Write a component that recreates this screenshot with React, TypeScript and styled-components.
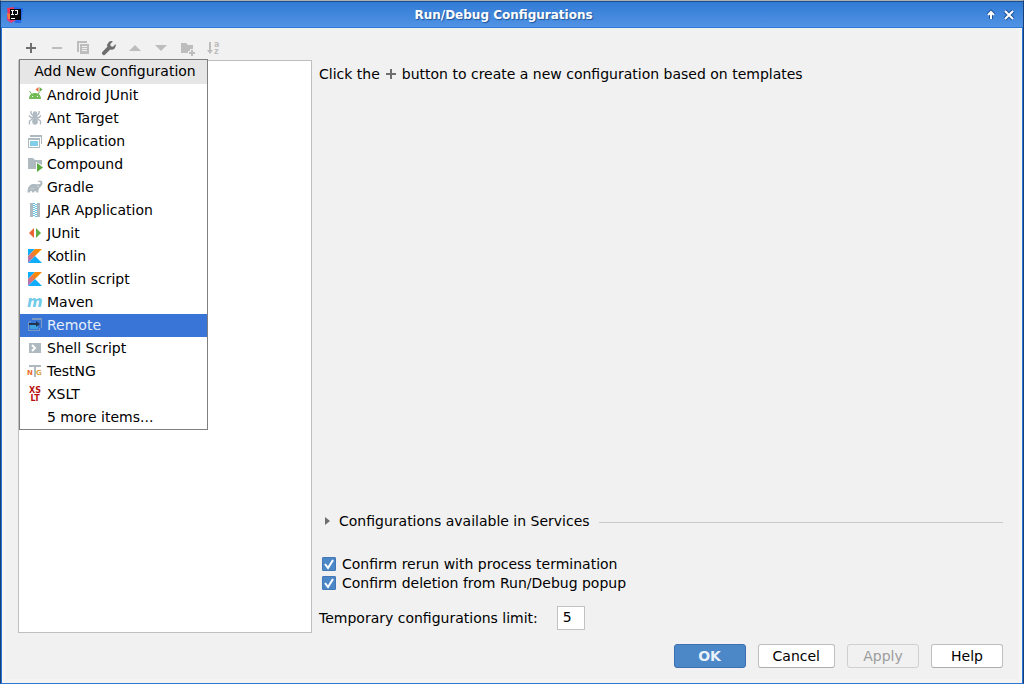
import React from "react";
import styled, { createGlobalStyle, css } from "styled-components";

const Global = createGlobalStyle`
  * { box-sizing: border-box; }
  body { margin: 0; background: #173f78; }
  body, button, input { font-family: "DejaVu Sans", sans-serif; font-size: 14px; color: #000; }
`;

const Window = styled.main`
  min-height: 100vh;
  display: flex;
  flex-direction: column;
  background: #f1f1f1;
  border: 1px solid #173f78;
  border-top-color: #a9b3b4;
  border-bottom-color: #2b76d2;
  box-shadow:
    inset 1px 0 #2b76d2,
    inset -1px 0 #2b76d2,
    inset 5px 0 #f5f4f3,
    inset -5px 0 #f5f4f3,
    inset 0 -4px #f5f4f3;
`;

const TitleBar = styled.header`
  display: flex;
  align-items: center;
  height: 27px;
  padding: 1px 7px 0 6px;
  gap: 4px;
  border-top: 1px solid #1d4d8d;
  border-bottom: 1px solid #2d78d6;
  background: linear-gradient(#317bd5, #5193e4);
`;

const Title = styled.h1`
  flex: 1;
  margin: 0;
  text-align: center;
  font-size: 12px;
  line-height: 16px;
  font-weight: bold;
  color: #fff;
  text-shadow: 1px 1px 1px #1d5299;
`;

const PlainButton = styled.button`
  display: flex;
  align-items: center;
  padding: 0;
  border: 0;
  background: none;
  text-align: left;
`;

const Body = styled.div`
  flex: 1;
  display: grid;
  grid-template-columns: 294px 1fr;
  column-gap: 7px;
  padding: 0 20px 0 17px;
`;

const Sidebar = styled.section`
  display: flex;
  flex-direction: column;
`;

const Toolbar = styled.div`
  display: flex;
  align-items: center;
  gap: 10px;
  height: 32px;
  padding: 8px 5px 0;
`;

const ConfigTree = styled.div`
  position: relative;
  flex: 1;
  min-height: 400px;
  background: #fff;
  border: 1px solid #bfbfbf;
`;

const Popup = styled.div`
  position: absolute;
  top: -2px;
  left: 0;
  width: 189px;
  background: #fff;
  border: 1px solid #7f7f7f;
`;

const PopupTitle = styled.h2`
  margin: 0;
  padding: 0 0 1px 3px;
  background: #e6e6e6;
  font-size: 14px;
  line-height: 23px;
  font-weight: normal;
  text-align: center;
`;

const MenuItem = styled(PlainButton)<{ $selected?: boolean }>`
  width: 100%;
  height: 23px;
  gap: 4px;
  padding: 0 0 1px 7px;
  line-height: 16px;
  ${(p) => p.$selected && css`
    background: #3875d7;
    color: #e6eefa;
  `}
`;

const Settings = styled.section`
  display: flex;
  flex-direction: column;
  padding: 36px 0 3px;
  line-height: 20px;
`;

const Hint = styled.p`
  display: flex;
  align-items: center;
  gap: 3px;
  margin: 0 0 auto;
`;

const ServicesRow = styled.div`
  display: flex;
  align-items: center;
  gap: 9px;
  margin-bottom: 24px;
`;

const Disclosure = styled(PlainButton)`
  gap: 4px;
  line-height: 20px;
`;

const Rule = styled.hr`
  flex: 1;
  margin: 2px 0 0;
  border: 0;
  border-top: 1px solid #c9c9c9;
`;

const CheckLabel = styled.label`
  display: flex;
  align-items: center;
  gap: 6px;
  padding-left: 3px;
  line-height: 19px;
`;

const CheckWrap = styled.span`
  display: grid;
  margin-bottom: 1px;
  > * { grid-area: 1 / 1; }
  svg { pointer-events: none; }
`;

const CheckInput = styled.input`
  appearance: none;
  width: 14px;
  height: 14px;
  margin: 0;
  border-radius: 1px;
  border: 1px solid #4377b5;
  background: #fff;
  &:checked { background: #4c88c8; }
`;

const LimitLabel = styled.label`
  display: flex;
  align-items: center;
  gap: 19px;
  margin-top: 13px;
`;

const LimitInput = styled.input`
  width: 28px;
  height: 24px;
  padding: 0 5px 2px;
  border: 1px solid #c2c2c2;
  background: #fff;
`;

const Footer = styled.footer`
  display: flex;
  justify-content: flex-end;
  gap: 12px;
  padding: 11px 20px 15px;
`;

const DialogButton = styled.button<{ $primary?: boolean }>`
  min-width: 72px;
  height: 24px;
  padding: 0 14px;
  border: 1px solid #bfbfbf;
  border-bottom-color: #adadad;
  border-radius: 3px;
  background: #fff;
  line-height: 20px;
  ${(p) => p.$primary && css`
    border-color: #3c70b2;
    background: #4c87c8;
    color: #e9f0f8;
    font-weight: bold;
  `}
  &:disabled {
    border-color: #cfcfcf;
    background: #f1f1f1;
    color: #9c9c9c;
  }
`;

const Icon = ({ children, size = 16 }: { children?: React.ReactNode; size?: number }) => (
  <svg width={size} height={size} viewBox={`0 0 ${size} ${size}`} aria-hidden="true">{children}</svg>
);

const DARK = "#6e6e6e";
const OFF = "#bdbdbd";
const STEEL = "#aeb9c0";

const plusShape = <path d="M7 3h2v4h4v2H9v4H7V9H3V7h4z" fill={DARK} />;

const tools: { name: string; off?: boolean; icon: React.ReactNode }[] = [
  { name: "Add", icon: plusShape },
  { name: "Remove", off: true, icon: <path d="M3 7h10v2H3z" fill={OFF} /> },
  {
    name: "Copy", off: true,
    icon: <path fillRule="evenodd" fill={OFF} d="M2 1h10v2H4v9H2zM5 4h9v10H5zM7 6h5v1H7zM7 8h5v1H7zM7 10h5v1H7z" />,
  },
  {
    name: "Edit templates",
    icon: <path fill={DARK} d="M14.6 4.1 12 6.7 9.7 6.3 9.3 4l2.6-2.6A4.3 4.3 0 0 0 6.4 6.8L1.5 11.7a1.8 1.8 0 0 0 2.8 2.8L9.2 9.6A4.3 4.3 0 0 0 14.6 4.1z" />,
  },
  { name: "Move up", off: true, icon: <path d="M2 11 8 5l6 6z" fill={OFF} /> },
  { name: "Move down", off: true, icon: <path d="M2 5h12l-6 6z" fill={OFF} /> },
  {
    name: "New folder", off: true,
    icon: <path fill={OFF} d="M2 3h5l2 2h5v4h-3v2H9v2H2zM12 10h2v2h2v2h-2v2h-2v-2h-2v-2h2z" />,
  },
  {
    name: "Sort", off: true,
    icon: (
      <>
        <path d="M4 2h2v8h2l-3 4-3-4h2z" fill={OFF} />
        <text x="9" y="7" fontSize="8" fontWeight="bold" fill={OFF}>a</text>
        <text x="9" y="14" fontSize="8" fontWeight="bold" fill={OFF}>z</text>
      </>
    ),
  },
];

const KotlinShape = ({ id }: { id: string }) => (
  <>
    <linearGradient id={id} x1="1" y1="15" x2="15" y2="1" gradientUnits="userSpaceOnUse">
      <stop offset="0.1" stopColor="#a974c8" />
      <stop offset="0.4" stopColor="#e87258" />
      <stop offset="0.65" stopColor="#f88909" />
    </linearGradient>
    <path d="M1 1h7L1 8z" fill="#0eaefd" />
    <path d="M8 1h7L1 15V8z" fill={`url(#${id})`} />
    <path d="M1 15l7-7 7 7z" fill="#0eaefd" />
  </>
);

const items: { name: string; icon?: React.ReactNode }[] = [
  {
    name: "Android JUnit",
    icon: (
      <>
        <path d="M2.500 4 4.500 7M12.500 5 11 7" stroke="#72b95a" strokeWidth="1" />
        <path fillRule="evenodd" fill="#72bb57" d="M2 12c0-4 2.500-6 6-6s6 2 6 6zM5 9v1h1V9zM10 9v1h1V9z" />
        <path d="M11.500 0v5L8.500 2.500z" fill="#ee6a3b" />
        <path d="M12.500 0v5l3-2.500z" fill="#5fad45" />
      </>
    ),
  },
  {
    name: "Ant Target",
    icon: (
      <>
        <g fill={STEEL}><circle cx="8" cy="3.500" r="2.200" /><circle cx="8" cy="7" r="2" /><ellipse cx="8" cy="11.500" rx="2.800" ry="3.200" /></g>
        <path d="M4 1v2.500L7 6.500M12 1v2.500L9 6.500M2 5.500l2 2h8l2-2M2.500 14.500V11L6 8.500M13.500 14.500V11L10 8.500" fill="none" stroke={STEEL} strokeWidth="1.400" />
      </>
    ),
  },
  {
    name: "Application",
    icon: (
      <>
        <path fillRule="evenodd" fill={STEEL} d="M3 2h12v9h-1V4H3zM1 5h12v10H1zM2 7v7h10V7z" />
        <path d="M3 8h8v5H3z" fill="#82cde8" />
      </>
    ),
  },
  {
    name: "Compound",
    icon: (
      <>
        <path d="M1 2h5l2 2h7v5L9 6v7H1z" fill={STEEL} />
        <path d="M10 7l6 4.500L10 16z" fill="#59a940" />
      </>
    ),
  },
  {
    name: "Gradle",
    icon: (
      <>
        <path fill={STEEL} d="M.5 13.500C.5 9 2 5.500 6 5c2-.3 3.500.2 5 .2 1.500 0 2.800-.8 2.600-1.800-.2-.8-1.300-.8-1.900 0l-.9-.8C12 1 15.500 1.200 15.500 4c0 2.500-2 3.500-3.500 5.500-.5 1.500-.7 2.500-.7 4H9.500c-.2-1-.6-1.500-1.200-1.500S7.200 12.500 7 13.500H5.300c-.2-1-.6-1.500-1.200-1.500s-1.100.5-1.300 1.500z" />
        <path d="M3 9c1.500 1.500 3 1.500 4.500 0" fill="none" stroke="#d2d9dd" strokeWidth=".7" />
        <circle cx="11" cy="7.500" r=".6" fill="#fff" />
      </>
    ),
  },
  {
    name: "JAR Application",
    icon: (
      <>
        <path d="M3 1h3v14H3zM10 1h3v14h-3z" fill={STEEL} />
        <path d="M7 1v14M9 2v14" stroke="#67c3df" strokeWidth="2" strokeDasharray="1 1" />
      </>
    ),
  },
  {
    name: "JUnit",
    icon: <><path d="M7 3v10L2 8z" fill="#ec6335" /><path d="M9 3v10l5-5z" fill="#60ae45" /></>,
  },
  { name: "Kotlin", icon: <KotlinShape id="kt-run" /> },
  { name: "Kotlin script", icon: <KotlinShape id="kt-script" /> },
  {
    name: "Maven",
    icon: <text x="0" y="13" fontSize="15" fontWeight="bold" fontStyle="italic" fill="#73cbe9">m</text>,
  },
  {
    name: "Remote",
    icon: (
      <>
        <path fillRule="evenodd" fill="#7a9ac4" d="M5 1h10v10h-1V3H5zM1 4h1v9h10v1H1zM1 4h3v1H1zM12 11h1v3h-1z" />
        <path d="M3 8h8v4H3z" fill="#3fa2e0" />
        <path d="M2 6h7V4l4 3-4 3V8H2z" fill="#24344f" />
      </>
    ),
  },
  {
    name: "Shell Script",
    icon: <><path d="M2 3h12v10H2z" fill={STEEL} /><path d="M5 5l3 3-3 3" fill="none" stroke="#fff" strokeWidth="2" /></>,
  },
  {
    name: "TestNG",
    icon: (
      <>
        <path d="M2 2h12v2H9v10H7V4H2z" fill={STEEL} />
        <text x="0" y="12" fontSize="7" fontWeight="bold" fill="#ee6b2f">N</text>
        <text x="9" y="12" fontSize="7" fontWeight="bold" fill="#e0a33d">G</text>
      </>
    ),
  },
  {
    name: "XSLT",
    icon: (
      <g fontSize="8" fontWeight="bold" fill="#b90f0f" textAnchor="middle">
        <text x="8" y="7">XS</text>
        <text x="8" y="15">LT</text>
      </g>
    ),
  },
  { name: "5 more items..." },
];

const AppLogo = () => (
  <Icon>
    <path d="M0 1 8 0v8H1z" fill="#ef315c" />
    <path d="M7 0l9 1-2 15H8z" fill="#2567ec" />
    <path d="M0 6l5 2 4 5-5 3-4-3z" fill="#e23a76" />
    <path d="M0 6l4 1v5H1z" fill="#f57b3e" />
    <path d="M3 2h11v11H3z" fill="#090909" />
    <path d="M4 3h3v1H6v3h1v1H4V7h1V4H4zM8 3h3v4l-1 1H8V7h2V4H8zM4 11h4v1H4z" fill="#fff" />
  </Icon>
);

const checks = ["Confirm rerun with process termination", "Confirm deletion from Run/Debug popup"];

export default function App() {
  return (
    <>
      <Global />
      <Window>
        <TitleBar>
          <AppLogo />
          <Title>Run/Debug Configurations</Title>
          <PlainButton aria-label="Shade window">
            <Icon size={14}>
              <path d="M7 11V4M4 7l3-3 3 3" fill="none" stroke="#1d5299" strokeWidth="4" />
              <path d="M7 11V4M4 7l3-3 3 3" fill="none" stroke="#fff" strokeWidth="2" />
            </Icon>
          </PlainButton>
          <PlainButton aria-label="Close window">
            <Icon size={14}>
              <path d="M3 3l8 8M11 3l-8 8" stroke="#1d5299" strokeWidth="4" />
              <path d="M3 3l8 8M11 3l-8 8" stroke="#fff" strokeWidth="2" />
            </Icon>
          </PlainButton>
        </TitleBar>
        <Body>
          <Sidebar>
            <Toolbar>
              {tools.map((t) => (
                <PlainButton key={t.name} aria-label={t.name} disabled={t.off}><Icon>{t.icon}</Icon></PlainButton>
              ))}
            </Toolbar>
            <ConfigTree>
              <Popup>
                <PopupTitle>Add New Configuration</PopupTitle>
                {items.map((i) => (
                  <MenuItem key={i.name} $selected={i.name === "Remote"}><Icon>{i.icon}</Icon>{i.name}</MenuItem>
                ))}
              </Popup>
            </ConfigTree>
          </Sidebar>
          <Settings>
            <Hint>Click the <Icon>{plusShape}</Icon> button to create a new configuration based on templates</Hint>
            <ServicesRow>
              <Disclosure aria-expanded={false}>
                <Icon><path d="M6 4l5 4-5 4z" fill={DARK} /></Icon>
                Configurations available in Services
              </Disclosure>
              <Rule />
            </ServicesRow>
            {checks.map((c) => (
              <CheckLabel key={c}>
                <CheckWrap>
                  <CheckInput type="checkbox" defaultChecked />
                  <Icon size={14}><path d="M3 7l3 4 5-8" fill="none" stroke="#fff" strokeWidth="2" /></Icon>
                </CheckWrap>
                {c}
              </CheckLabel>
            ))}
            <LimitLabel>Temporary configurations limit: <LimitInput defaultValue="5" /></LimitLabel>
          </Settings>
        </Body>
        <Footer>
          <DialogButton $primary>OK</DialogButton>
          <DialogButton>Cancel</DialogButton>
          <DialogButton disabled>Apply</DialogButton>
          <DialogButton>Help</DialogButton>
        </Footer>
      </Window>
    </>
  );
}
